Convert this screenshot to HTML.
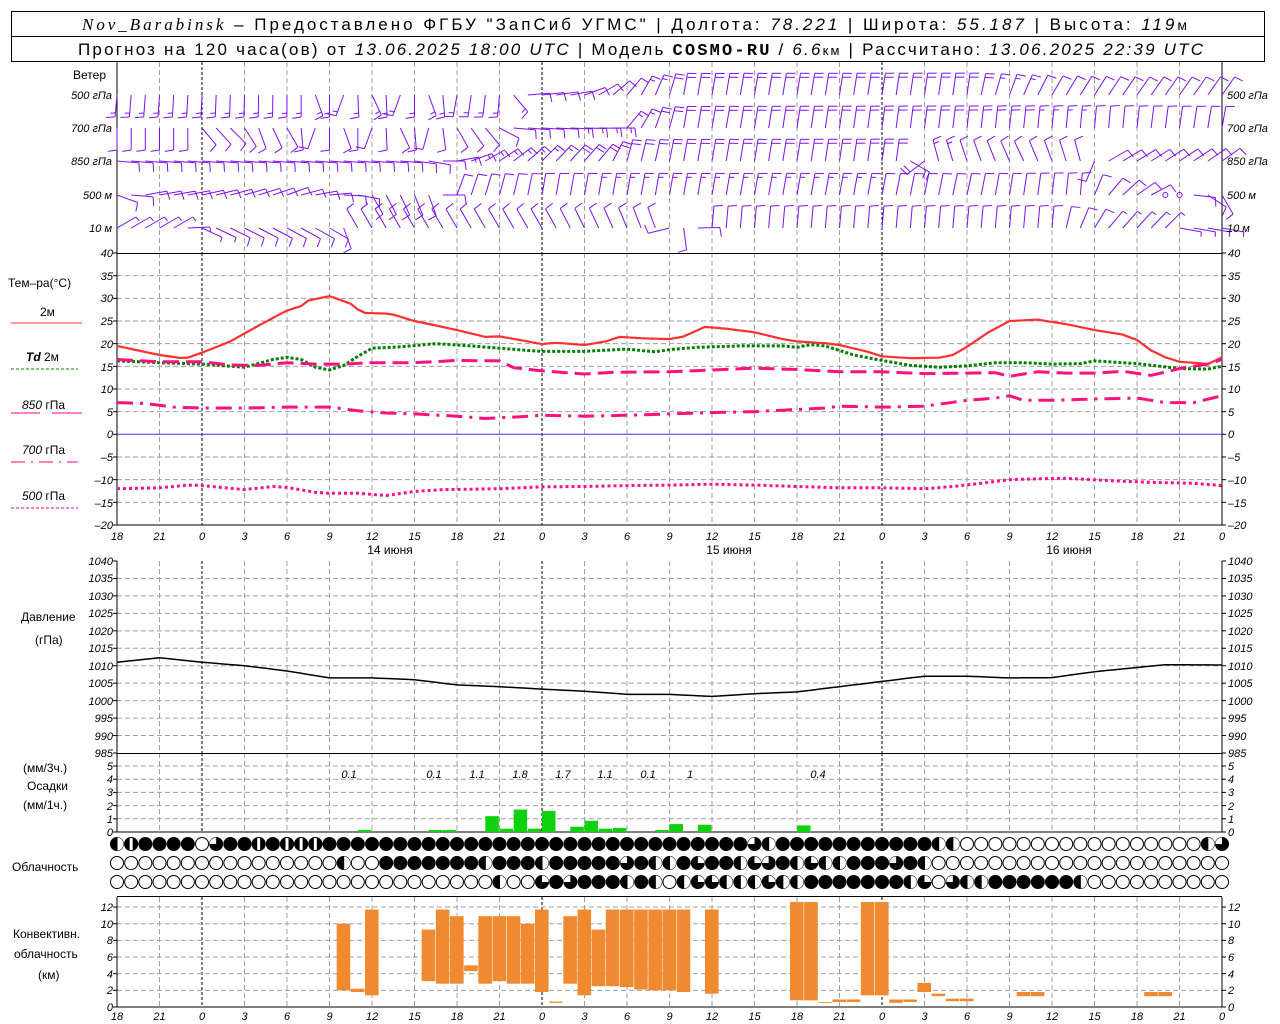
<!DOCTYPE html>
<html><head><meta charset="utf-8"><style>
html,body{margin:0;padding:0;background:#fff;width:1280px;height:1024px;overflow:hidden}
svg{display:block}
text{font-family:"Liberation Sans",sans-serif;fill:#000}
.t{font-size:11px;font-style:italic}
.l{font-size:12px}
.h{font-size:17px}
</style></head><body>
<svg id="s" width="1280" height="1024" viewBox="0 0 1280 1024" xmlns="http://www.w3.org/2000/svg">
<rect x="11.5" y="11.5" width="1253" height="50" fill="none" stroke="#000"/>
<line x1="11" y1="36.5" x2="1265" y2="36.5" stroke="#000"/>
<text class="h" y="30" x="82" textLength="1105" lengthAdjust="spacing"><tspan font-family="Liberation Serif" font-style="italic">Nov_Barabinsk</tspan> – Предоставлено ФГБУ "ЗапСиб УГМС" | Долгота: <tspan font-style="italic">78.221</tspan> | Широта: <tspan font-style="italic">55.187</tspan> | Высота: <tspan font-style="italic">119</tspan><tspan font-size="14">м</tspan></text>
<text class="h" y="55" x="78" font-size="16" textLength="1125" lengthAdjust="spacing">Прогноз на 120 часа(ов) от <tspan font-style="italic">13.06.2025 18:00 UTC</tspan>  | Модель <tspan font-family="Liberation Mono" font-weight="bold">COSMO-RU</tspan> / <tspan font-style="italic">6.6</tspan><tspan font-size="13">км</tspan> | Рассчитано: <tspan font-style="italic">13.06.2025 22:39 UTC</tspan></text>
<g id="g"></g>
<g class="l">
<text x="73" y="79">Ветер</text>
<text x="8" y="287">Тем–ра(°С)</text>
<text x="40" y="316">2м</text>
<text x="26" y="361"><tspan font-style="italic" font-weight="bold">Td</tspan>  2м</text>
<text x="22" y="409"><tspan font-style="italic">850</tspan> гПа</text>
<text x="22" y="454"><tspan font-style="italic">700</tspan> гПа</text>
<text x="22" y="500"><tspan font-style="italic">500</tspan> гПа</text>
<text x="21" y="621">Давление</text>
<text x="35" y="644">(гПа)</text>
<text x="23" y="772">(мм/3ч.)</text>
<text x="27" y="790">Осадки</text>
<text x="23" y="809">(мм/1ч.)</text>
<text x="12" y="871">Облачность</text>
<text x="13" y="938">Конвективн.</text>
<text x="14" y="958">облачность</text>
<text x="38" y="979">(км)</text>
</g>
<g class="t" font-size="10">
<text x="112" y="99" text-anchor="end">500 гПа</text>
<text x="112" y="132" text-anchor="end">700 гПа</text>
<text x="112" y="165" text-anchor="end">850 гПа</text>
<text x="112" y="199" text-anchor="end">500 м</text>
<text x="112" y="232" text-anchor="end">10  м</text>
<text x="1227" y="99">500 гПа</text>
<text x="1227" y="132">700 гПа</text>
<text x="1227" y="165">850 гПа</text>
<text x="1227" y="199">500 м</text>
<text x="1227" y="232">10  м</text>
</g>
<g class="t" font-size="10" text-anchor="end">
<text x="113" y="257">40</text><text x="113" y="280">35</text><text x="113" y="302">30</text><text x="113" y="325">25</text><text x="113" y="348">20</text><text x="113" y="371">15</text><text x="113" y="393">10</text><text x="113" y="416">5</text><text x="113" y="438">0</text><text x="113" y="461">–5</text><text x="113" y="484">–10</text><text x="113" y="507">–15</text><text x="113" y="529">–20</text>
<text x="113" y="565">1040</text><text x="113" y="582">1035</text><text x="113" y="600">1030</text><text x="113" y="617">1025</text><text x="113" y="635">1020</text><text x="113" y="652">1015</text><text x="113" y="670">1010</text><text x="113" y="687">1005</text><text x="113" y="705">1000</text><text x="113" y="722">995</text><text x="113" y="740">990</text><text x="113" y="757">985</text>
<text x="113" y="770">5</text><text x="113" y="783">4</text><text x="113" y="796">3</text><text x="113" y="810">2</text><text x="113" y="823">1</text><text x="113" y="836">0</text>
<text x="113" y="911">12</text><text x="113" y="928">10</text><text x="113" y="944">8</text><text x="113" y="961">6</text><text x="113" y="978">4</text><text x="113" y="994">2</text><text x="113" y="1011">0</text>
</g>
<g class="t" font-size="10">
<text x="1228" y="257">40</text><text x="1228" y="280">35</text><text x="1228" y="302">30</text><text x="1228" y="325">25</text><text x="1228" y="348">20</text><text x="1228" y="371">15</text><text x="1228" y="393">10</text><text x="1228" y="416">5</text><text x="1228" y="438">0</text><text x="1228" y="461">–5</text><text x="1228" y="484">–10</text><text x="1228" y="507">–15</text><text x="1228" y="529">–20</text>
<text x="1228" y="565">1040</text><text x="1228" y="582">1035</text><text x="1228" y="600">1030</text><text x="1228" y="617">1025</text><text x="1228" y="635">1020</text><text x="1228" y="652">1015</text><text x="1228" y="670">1010</text><text x="1228" y="687">1005</text><text x="1228" y="705">1000</text><text x="1228" y="722">995</text><text x="1228" y="740">990</text><text x="1228" y="757">985</text>
<text x="1228" y="770">5</text><text x="1228" y="783">4</text><text x="1228" y="796">3</text><text x="1228" y="810">2</text><text x="1228" y="823">1</text><text x="1228" y="836">0</text>
<text x="1228" y="911">12</text><text x="1228" y="928">10</text><text x="1228" y="944">8</text><text x="1228" y="961">6</text><text x="1228" y="978">4</text><text x="1228" y="994">2</text><text x="1228" y="1011">0</text>
</g>
<g class="t" font-size="14" text-anchor="middle">
<text y="540"><tspan x="117">18</tspan><tspan x="159.5">21</tspan><tspan x="202">0</tspan><tspan x="244.5">3</tspan><tspan x="287">6</tspan><tspan x="329.5">9</tspan><tspan x="372">12</tspan><tspan x="414.5">15</tspan><tspan x="457">18</tspan><tspan x="499.5">21</tspan><tspan x="542">0</tspan><tspan x="584.5">3</tspan><tspan x="627">6</tspan><tspan x="669.5">9</tspan><tspan x="712">12</tspan><tspan x="754.5">15</tspan><tspan x="797">18</tspan><tspan x="839.5">21</tspan><tspan x="882">0</tspan><tspan x="924.5">3</tspan><tspan x="967">6</tspan><tspan x="1009.5">9</tspan><tspan x="1052">12</tspan><tspan x="1094.5">15</tspan><tspan x="1137">18</tspan><tspan x="1179.5">21</tspan><tspan x="1222">0</tspan></text>
<text y="1020"><tspan x="117">18</tspan><tspan x="159.5">21</tspan><tspan x="202">0</tspan><tspan x="244.5">3</tspan><tspan x="287">6</tspan><tspan x="329.5">9</tspan><tspan x="372">12</tspan><tspan x="414.5">15</tspan><tspan x="457">18</tspan><tspan x="499.5">21</tspan><tspan x="542">0</tspan><tspan x="584.5">3</tspan><tspan x="627">6</tspan><tspan x="669.5">9</tspan><tspan x="712">12</tspan><tspan x="754.5">15</tspan><tspan x="797">18</tspan><tspan x="839.5">21</tspan><tspan x="882">0</tspan><tspan x="924.5">3</tspan><tspan x="967">6</tspan><tspan x="1009.5">9</tspan><tspan x="1052">12</tspan><tspan x="1094.5">15</tspan><tspan x="1137">18</tspan><tspan x="1179.5">21</tspan><tspan x="1222">0</tspan></text>
</g>
<g class="l" font-size="13" text-anchor="middle">
<text x="390" y="554">14 июня</text><text x="729" y="554">15 июня</text><text x="1069" y="554">16 июня</text>
</g>
<g class="t" font-size="13" text-anchor="middle">
<text x="349" y="778">0.1</text><text x="434" y="778">0.1</text><text x="477" y="778">1.1</text><text x="520" y="778">1.8</text><text x="563" y="778">1.7</text><text x="605" y="778">1.1</text><text x="648" y="778">0.1</text><text x="690" y="778">1</text><text x="818" y="778">0.4</text>
</g>
</svg>
<script>
(function(){
var NS="http://www.w3.org/2000/svg",G=document.getElementById("g");
function el(n,a){var e=document.createElementNS(NS,n);for(var k in a)e.setAttribute(k,a[k]);G.appendChild(e);return e;}
function X(h){return 117+h*340/24;}
function ip(k,h){for(var i=0;i<k.length-1;i++){if(h>=k[i][0]&&h<=k[i+1][0]){var t=(h-k[i][0])/(k[i+1][0]-k[i][0]);return k[i][1]+t*(k[i+1][1]-k[i][1]);}}return h<k[0][0]?k[0][1]:k[k.length-1][1];}
[[62,253],[253,525],[561,753],[753,832],[897,1007]].forEach(function(r){
 for(var h=0;h<=78;h+=3){var day=(h%24==6);el("line",{x1:X(h),y1:r[0],x2:X(h),y2:r[1],stroke:day?"#000":"#a0a0a0","stroke-dasharray":day?"3,2":"5,3"});}
});
function hg(y){el("line",{x1:117,y1:y,x2:1222,y2:y,stroke:"#a0a0a0","stroke-dasharray":"5,3"});}
for(var T=35;T>=-15;T-=5){if(T!=0)hg(253+(40-T)*272/60);}
for(var p=1035;p>985;p-=5)hg(561+(1040-p)*192/55);
for(var m=1;m<=5;m++)hg(832-m*13.2);
for(var k=2;k<=12;k+=2)hg(1007-k*8.33);
function ln(a,b,c,d,s,w){el("line",{x1:a,y1:b,x2:c,y2:d,stroke:s||"#000","stroke-width":w||1});}
ln(117,253.5,1222,253.5);ln(117,525,1222,525);ln(117,753.5,1222,753.5);ln(117,832,1222,832);ln(117,896.5,1222,896.5);ln(117,1007,1222,1007);
[[62,253],[253,525],[561,753],[753,832],[897,1007]].forEach(function(r){ln(117,r[0],117,r[1]);ln(1222,r[0],1222,r[1]);});
ln(117,434.3,1222,434.3,"#3030ff");
function tk(y){ln(113,y,117,y);ln(1222,y,1226,y);}
for(var T=40;T>=-20;T-=5)tk(253+(40-T)*272/60);
for(var p=1040;p>=985;p-=5)tk(561+(1040-p)*192/55);
for(var k=0;k<=12;k+=2)tk(1007-k*8.33);
for(var m=0;m<=5;m++)tk(832-m*13.2);
ln(11,323,82,323,"#ff3030",1);
el("line",{x1:11,y1:369,x2:78,y2:369,stroke:"#008000","stroke-dasharray":"3,2"});
ln(11,413,40,413,"#ff0080");ln(52,413,82,413,"#ff0080");
el("line",{x1:11,y1:462,x2:78,y2:462,stroke:"#ff0080","stroke-dasharray":"14,6,2,6"});
el("line",{x1:11,y1:508,x2:78,y2:508,stroke:"#ff0080","stroke-dasharray":"3,2"});
function YT(t){return 253+(40-t)*272/60;}
function curve(keys,yf,attrs){var pts=[];for(var h=0;h<=78;h+=0.5)pts.push(X(h).toFixed(1)+","+yf(ip(keys,h)).toFixed(1));attrs.points=pts.join(" ");attrs.fill="none";el("polyline",attrs);}
var t2=[[0,19.5],[3,17.5],[4.8,16.7],[6,18],[8,20.5],[10,24],[11.5,26.5],[12,27.3],[13,28.3],[13.5,29.5],[15,30.5],[16.5,28.8],[17.3,26.8],[19.3,26.6],[21,25],[24,23],[26,21.5],[27,21.6],[29,20.5],[30,19.9],[31,20.2],[33,19.7],[34.5,20.5],[35.5,21.5],[37,21.2],[39,21],[40,21.6],[41.5,23.7],[43,23.3],[45,22.5],[47,21],[48,20.5],[50,20.1],[51,19.7],[53,18.2],[54,17.2],[56,16.8],[58,16.9],[59,17.5],[60,19.3],[61.5,22.5],[63,25],[65,25.3],[67,24.3],[69,23],[71,22],[72,20.8],[73,18.5],[74,17],[75,16],[76,15.8],[77,15.5],[78,17]];
curve(t2,YT,{stroke:"#ff3030","stroke-width":2.2});
var td=[[0,16.2],[3,15.8],[6,15.5],[9,14.8],[11,16.5],[12,17],[13,16.5],[14,14.8],[15,14.2],[16,15.2],[17,17.2],[18,19],[20,19.3],[22.5,20],[25,19.5],[27,19],[29,18.5],[30,18.3],[33,18.3],[36,18.8],[38,18.2],[39,18.7],[41,19.2],[44,19.5],[47,19.5],[48,19.2],[49,19.8],[50,19.5],[52,17.5],[54,16.3],[56,15.2],[58,14.8],[60,15.1],[62,15.8],[64,15.8],[66,15.5],[68,15.6],[69,16.2],[72,15.6],[75,14.5],[77,14.4],[78,15]];
curve(td,YT,{stroke:"#008000","stroke-width":3,"stroke-dasharray":"3,2"});
var t850=[[0,16.5],[3,16],[6,16],[8,15.3],[10,15.2],[12,15.8],[14,15.5],[16,15.5],[18,15.8],[21,15.8],[24,16.3],[27,16.2],[28,14.7],[30,14],[33,13.3],[35,13.7],[39,13.8],[42,14.2],[45,14.6],[48,14.3],[51,13.8],[54,13.8],[57,13.4],[60,13.5],[62,13.6],[63,12.8],[65,13.8],[67,13.5],[69,13.5],[71,13.9],[73,13],[75,14.5],[77,15.5],[78,16.5]];
curve(t850,YT,{stroke:"#ff1080","stroke-width":3,"stroke-dasharray":"16,7"});
var t700=[[0,7],[2,6.8],[4,6],[6,5.8],[9,5.8],[12,6],[15,6],[17,5.2],[19,4.7],[21,4.5],[24,4],[26,3.5],[28,3.8],[30,4.2],[33,4],[36,4.2],[42,4.8],[45,5],[48,5.5],[50,5.8],[51,6.2],[54,6],[57,6.2],[60,7.5],[62,8],[63,8.5],[64,7.5],[66,7.5],[69,7.8],[72,8],[74,7],[76,7],[78,8.5]];
curve(t700,YT,{stroke:"#ff1080","stroke-width":3,"stroke-dasharray":"16,7,3,7"});
var t500=[[0,-12],[3,-11.8],[5,-11.2],[6,-11.3],[9,-12.2],[11,-11.5],[12,-11.7],[14,-12.8],[15,-13],[17,-13],[19,-13.5],[21,-12.6],[23,-12.2],[27,-12],[30,-11.6],[33,-11.5],[36,-11.3],[39,-11.2],[42,-11],[45,-11.2],[48,-11.5],[51,-11.8],[54,-11.8],[57,-12],[59,-11.5],[61,-10.8],[63,-10],[65,-9.8],[67,-9.7],[70,-10.2],[73,-10.6],[76,-10.8],[78,-11.3]];
curve(t500,YT,{stroke:"#ff1090","stroke-width":3,"stroke-dasharray":"3,3"});
var pr=[[0,1011],[3,1012.3],[6,1011],[9,1010],[12,1008.5],[15,1006.5],[18,1006.5],[21,1006],[24,1004.5],[27,1004],[30,1003.3],[33,1002.7],[36,1001.8],[39,1001.8],[42,1001.2],[45,1002],[48,1002.5],[51,1004],[54,1005.5],[57,1007],[60,1007],[63,1006.5],[66,1006.6],[69,1008.3],[72,1009.5],[74,1010.3],[78,1010.2]];
curve(pr,function(p){return 561+(1040-p)*192/55;},{stroke:"#000","stroke-width":1.5});
[[17,0.15],[22,0.15],[23,0.15],[26,1.2],[27,0.25],[28,1.7],[29,0.25],[30,1.6],[32,0.4],[33,0.85],[34,0.25],[35,0.3],[38,0.15],[39,0.6],[41,0.55],[48,0.5]].forEach(function(b){var h=b[1]*13.2;el("rect",{x:X(b[0]),y:832-h,width:13.5,height:h,fill:"#10d010"});});
var cv=[[16,2,10],[17,1.8,2.2],[18,1.4,11.7],[22,3.1,9.3],[23,2.8,11.7],[24,2.8,10.9],[25,4.3,5],[26,2.8,10.9],[27,3.1,10.9],[28,2.8,10.9],[29,2.8,10],[30,1.8,11.7],[31,0.5,0.65],[32,2.8,10.9],[33,1.4,11.7],[34,2.5,9.3],[35,2.5,11.7],[36,2.4,11.7],[37,2.1,11.7],[38,2,11.7],[39,2,11.7],[40,1.8,11.7],[42,1.6,11.7],[48,0.8,12.6],[49,0.8,12.6],[50,0.5,0.6],[51,0.6,0.9],[52,0.6,0.9],[53,1.4,12.6],[54,1.4,12.6],[55,0.5,0.9],[56,0.6,0.9],[57,1.8,2.9],[58,1.3,1.6],[59,0.7,1],[60,0.7,1],[64,1.3,1.8],[65,1.3,1.8],[73,1.3,1.8],[74,1.3,1.8]];
cv.forEach(function(b){var y1=1007-b[2]*8.33,y2=1007-b[1]*8.33;el("rect",{x:X(b[0])-7,y:y1,width:13.6,height:y2-y1,fill:"#f08a30"});});
var rows=["HWFFFFETFFWFWWWFFFFFFFFFFFFFFFFFFFFFFFFFFFFFFTHFFFFFFFFFFFHHEEEEEEEEEEEEEEEEEHT",
"EEEEEEEEEEEEEEEEHEEFFFFFFFHFFFHFFFFFTFHHFQFFHQTFHQHHFFFTFHEEEEEEEEEEEEEEEEEEEEE",
"EEEEEEEEEEEEEEEEEEEEEEEEEEEHEEQFTFFFHFHEHQQHHHQHHFFFFFFFHQETHHFFFFFFHEEEEEEEEEE"];
var ry=[844,863,882];
rows.forEach(function(s,r){for(var h=0;h<=78;h++){var c=s[h]||"E",x=X(h),y=ry[r],R=6.5;
 el("circle",{cx:x,cy:y,r:R,fill:c=="E"?"#fff":"#000",stroke:"#000"});
 if(c=="H"){el("path",{d:"M"+x+","+(y-R)+"A"+R+","+R+" 0 0 1 "+x+","+(y+R)+"Z",fill:"#fff"});el("line",{x1:x,y1:y-R,x2:x,y2:y+R,stroke:"#000"});}
 if(c=="W"){el("rect",{x:x-1.5,y:y-R,width:3,height:2*R,fill:"#fff"});el("circle",{cx:x,cy:y,r:R,fill:"none",stroke:"#000"});}
 if(c=="Q"){el("path",{d:"M"+x+","+y+"L"+x+","+(y-R)+"A"+R+","+R+" 0 0 1 "+(x+R)+","+y+"Z",fill:"#fff"});}
 if(c=="T"){el("path",{d:"M"+x+","+y+"L"+x+","+(y-R)+"A"+R+","+R+" 0 0 0 "+(x-R)+","+y+"Z",fill:"#fff"});}
}});
var W=[
 {y:95,d:[[0,185],[13,180],[14,160],[16,200],[18,155],[20,200],[22,160],[24,190],[27,185],[28,140],[29,85],[32,80],[34,60],[37,30],[40,10],[60,8],[63,20],[66,30],[72,35],[78,35]],s:[[0,1.5],[28,1.5],[29,1],[36,1],[40,2],[60,2],[66,1],[78,1]]},
 {y:128,d:[[0,180],[5,180],[6,140],[8,135],[10,160],[12,150],[14,200],[16,160],[18,200],[20,155],[22,195],[24,150],[26,140],[28,95],[35,90],[36,40],[38,20],[40,10],[70,5],[78,10]],s:[[0,1],[28,1],[36,1.5],[40,2],[62,2],[70,1],[78,1]]},
 {y:161,d:[[0,95],[20,95],[22,100],[26,60],[30,45],[34,40],[36,15],[40,10],[55,8],[58,345],[64,335],[68,345],[70,60],[78,55]],s:[[0,1],[20,1],[36,2],[56,2],[60,1],[78,1]]},
 {y:195,d:[[0,110],[2,80],[4,80],[12,70],[15,85],[17,100],[18,150],[22,160],[24,20],[30,10],[50,10],[60,12],[68,5],[70,40],[74,70],[75,70],[78,150]],s:[[0,1],[15,1],[24,1],[44,1.5],[62,1],[78,1]]},
 {y:228,d:[[0,60],[4,60],[6,115],[15,120],[16,160],[17,330],[30,330],[38,340],[42,5],[66,5],[70,40],[74,45],[75,100],[78,100]],s:[[0,0.5],[16,1],[18,1],[40,1],[60,1],[78,0.5]]}
];
var P="#8010f0";
W.forEach(function(r){for(var h=0;h<=78;h++){
 var x=X(h),y=r.y;
 if(r.y==195&&(h==74||h==75)){el("circle",{cx:x,cy:y,r:2.5,fill:"none",stroke:P});continue;}
 var a=ip(r.d,h)*Math.PI/180,L=22,sx=Math.sin(a),sy=-Math.cos(a);
 var tx=x+L*sx,ty=y+L*sy;
 el("line",{x1:x,y1:y,x2:tx,y2:ty,stroke:P,"stroke-width":1});
 var n=Math.round(ip(r.s,h)*2)/2,b=a+Math.PI/2-0.15,bx=Math.sin(b),by=-Math.cos(b),i=0;
 while(n>0){var len=n>=1?9:5;var px=tx-i*4*sx,py=ty-i*4*sy;
  el("line",{x1:px,y1:py,x2:px+len*bx,y2:py+len*by,stroke:P,"stroke-width":1});n-=1;i++;}
}});
})();
</script>
</body></html>
